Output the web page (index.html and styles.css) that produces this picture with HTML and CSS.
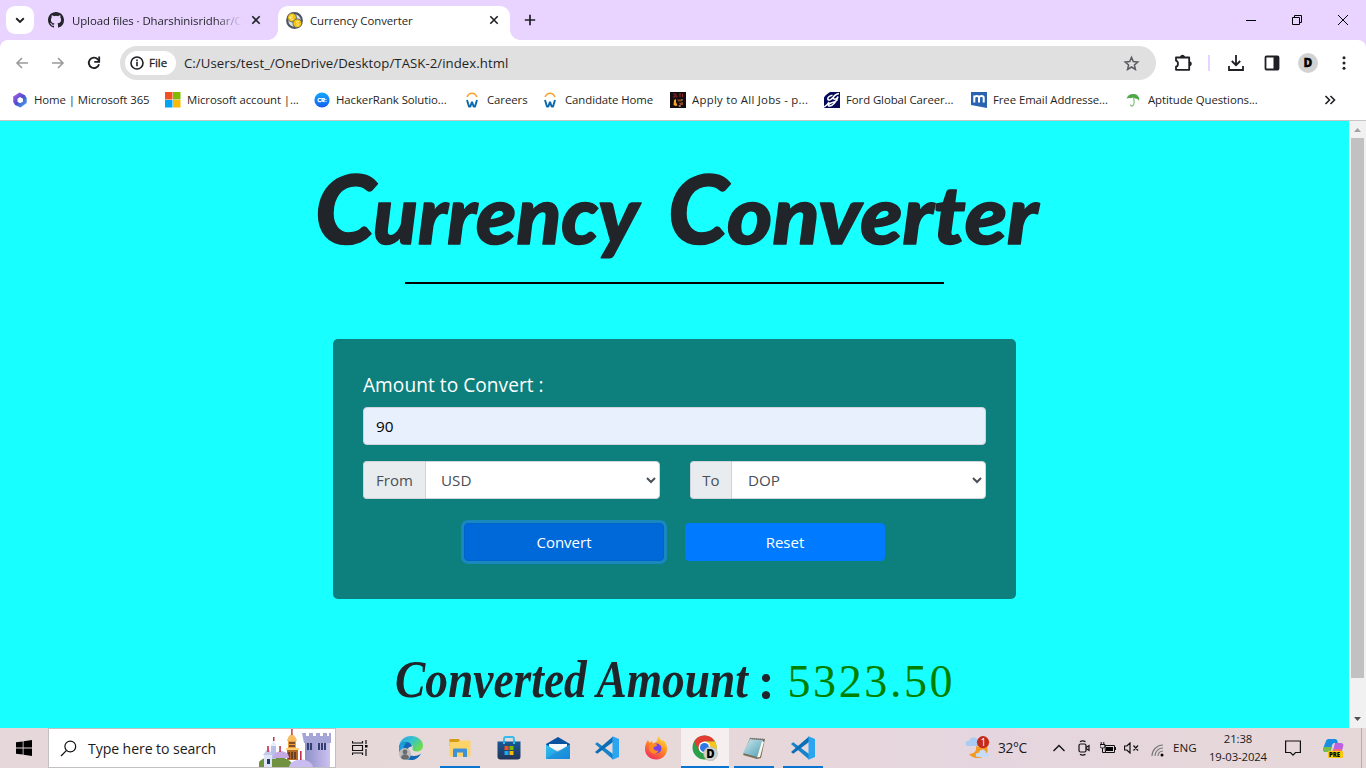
FILE: index.html
```html
<!DOCTYPE html>
<html lang="en">
<head>
<meta charset="utf-8">
<title>Currency Converter</title>
<link rel="stylesheet" href="styles.css">
</head>
<body>
<svg class="defs" width="0" height="0">
  <defs>
    <linearGradient id="m365" x1="0" y1="0" x2="1" y2="1"><stop offset="0" stop-color="#c05be8"/><stop offset=".5" stop-color="#4a50cf"/><stop offset="1" stop-color="#42b4f0"/></linearGradient>
    <linearGradient id="edgeA" x1="0" y1="0" x2="1" y2=".6"><stop offset="0" stop-color="#2b9fe0"/><stop offset=".5" stop-color="#35c2d0"/><stop offset="1" stop-color="#6fdc4c"/></linearGradient>
    <linearGradient id="fox" x1=".8" y1="0" x2=".2" y2="1"><stop offset="0" stop-color="#ffe03a"/><stop offset=".45" stop-color="#ff8a1f"/><stop offset="1" stop-color="#ef2763"/></linearGradient>
    <linearGradient id="tower" x1="0" x2="1"><stop offset="0" stop-color="#8e8fc9"/><stop offset="1" stop-color="#cdc2f0"/></linearGradient>
    <linearGradient id="store" x1="0" y1="0" x2="0" y2="1"><stop offset="0" stop-color="#155a97"/><stop offset="1" stop-color="#233456"/></linearGradient>
    <linearGradient id="mail" x1="0" y1="0" x2="1" y2="1"><stop offset="0" stop-color="#35c5f2"/><stop offset="1" stop-color="#1a86d8"/></linearGradient>
    <linearGradient id="pad" x1="0" y1="0" x2="1" y2="1"><stop offset="0" stop-color="#cfeaf0"/><stop offset="1" stop-color="#4f9fb3"/></linearGradient>
    <linearGradient id="hr" x1="0" y1="0" x2="0" y2="1"><stop offset="0" stop-color="#12a8ff"/><stop offset="1" stop-color="#1260f0"/></linearGradient>
    <symbol id="careers" viewBox="0 0 16 16"><path d="M2 5C3.200 2.400 5 1.200 7 1.200s3.800 1.200 5 3.800" fill="none" stroke="#f5a32c" stroke-width="1.500"/><path d="M2 8l2 6.600h1.300L7 9.800l1.700 4.800H10L12 8" fill="none" stroke="#0a68ae" stroke-width="1.900" stroke-linejoin="bevel"/></symbol>
    <symbol id="close" viewBox="0 0 10 10"><path d="M1.300 1.300l7.400 7.400M8.700 1.300L1.300 8.700" stroke="#1f1f24" stroke-width="1.600"/></symbol>
    <symbol id="vscode" viewBox="0 0 24 24"><path d="M0 8l2.200-1.700L18 18v5.500z" fill="#1583cc"/><path d="M0 16l2.200 1.700L18 6V.5z" fill="#0b6db5"/><path d="M17.500.2L24 3v18l-6.500 2.800z" fill="#2ba5ef"/></symbol>
  </defs>
</svg>

<header class="tabstrip">
  <div class="tab-search"><svg width="10" height="7" viewBox="0 0 10 7"><path d="M1.200 1.300L5 5l3.800-3.700" fill="none" stroke="#1f1f24" stroke-width="1.900"/></svg></div>
  <div class="tab tab-idle">
    <svg width="16" height="16" viewBox="0 0 16 16"><path fill="#24242c" d="M8 0C3.580 0 0 3.580 0 8c0 3.540 2.290 6.530 5.470 7.590.4.070.550-.170.550-.380 0-.190-.010-.820-.010-1.490-2.010.370-2.530-.490-2.690-.940-.090-.230-.480-.940-.820-1.130-.280-.150-.680-.520-.010-.530.630-.010 1.080.580 1.230.820.720 1.210 1.870.870 2.330.660.070-.520.280-.870.510-1.070-1.780-.2-3.640-.890-3.640-3.950 0-.870.310-1.590.820-2.150-.080-.2-.360-1.020.080-2.120 0 0 .670-.210 2.200.820a7.500 7.500 0 0 1 4 0c1.530-1.040 2.200-.820 2.200-.820.440 1.100.160 1.920.080 2.120.510.560.820 1.270.820 2.150 0 3.070-1.870 3.750-3.650 3.950.290.250.540.730.540 1.480 0 1.070-.010 1.930-.010 2.200 0 .210.150.460.550.380A8 8 0 0 0 16 8c0-4.420-3.580-8-8-8z"/></svg>
    <span class="tab-title fade">Upload files · Dharshinisridhar/C</span>
    <svg class="tab-x" width="10" height="10"><use href="#close"/></svg>
  </div>
  <div class="tab tab-live">
    <svg width="17" height="17" viewBox="0 0 17 17"><circle cx="8.500" cy="8.500" r="7.300" fill="#dfe2e8" stroke="#4b5563" stroke-width="2.200"/><circle cx="6" cy="5.500" r="4.400" fill="#f6c40d" stroke="#4b5563" stroke-width=".8"/><circle cx="11.300" cy="11.300" r="4.400" fill="#f6c40d" stroke="#4b5563" stroke-width=".8"/><path d="M7.200 4a2 2 0 1 0 0 3.200M4 5.600h2.500M12.800 9.900c-1.400-1-2.800-.3-2.300.7s2.600.9 2.200 2-1.800.8-2.500.2" fill="none" stroke="#fff3a6" stroke-width=".9"/></svg>
    <span class="tab-title">Currency Converter</span>
    <svg class="tab-x" width="10" height="10"><use href="#close"/></svg>
  </div>
  <svg class="new-tab" width="12" height="12" viewBox="0 0 12 12"><path d="M6 .8v10.400M.8 6h10.400" stroke="#1f1f24" stroke-width="1.700"/></svg>
  <div class="win-controls">
    <svg width="12" height="12" viewBox="0 0 12 12"><path d="M1 6.500h10" stroke="#000"/></svg>
    <svg width="12" height="12" viewBox="0 0 12 12"><path d="M1.500 3.500h7v7h-7zM3.500 3.500v-2h7v7h-2" fill="none" stroke="#000"/></svg>
    <svg width="12" height="12" viewBox="0 0 12 12"><path d="M1 1l10 10M11 1L1 11" stroke="#000"/></svg>
  </div>
</header>

<nav class="toolbar">
  <div class="nav-buttons">
    <svg width="14" height="12" viewBox="0 0 14 12"><path d="M13 6H2M7 1L2 6l5 5" fill="none" stroke="#9b9b9e" stroke-width="1.600"/></svg>
    <svg width="14" height="12" viewBox="0 0 14 12"><path d="M1 6h11M7 1l5 5-5 5" fill="none" stroke="#9b9b9e" stroke-width="1.600"/></svg>
    <svg width="14" height="14" viewBox="0 0 14 14"><path d="M12 8.300A5.200 5.200 0 1 1 10.800 3.300L12 4.600" fill="none" stroke="#1f1f24" stroke-width="1.900"/><path d="M12.200.5v5.300H7.300" fill="none" stroke="#1f1f24" stroke-width="1.800"/></svg>
  </div>
  <div class="omnibox">
    <div class="file-chip"><svg width="14" height="14" viewBox="0 0 14 14"><circle cx="7" cy="7" r="6" fill="none" stroke="#1f1f24" stroke-width="1.600"/><path d="M7 6v4.200M7 3.600v1.600" stroke="#1f1f24" stroke-width="1.600"/></svg><span>File</span></div>
    <span class="url">C:/Users/test_/OneDrive/Desktop/TASK-2/index.html</span>
    <svg class="star" width="17" height="17" viewBox="0 0 17 17"><path d="M8.500 2.400l1.800 4.200 4.500.4-3.400 3 1 4.400-3.900-2.400-3.900 2.400 1-4.400-3.400-3 4.500-.4z" fill="none" stroke="#5b5b60" stroke-width="1.500"/></svg>
  </div>
  <div class="actions">
    <svg width="18" height="18" viewBox="0 0 18 18"><path d="M2 3.500h13.200v12.300H2V12.700c2.600-.3 2.600-5.500 0-6z" fill="none" stroke="#1f1f24" stroke-width="1.800" stroke-linejoin="round"/><path d="M6 3.500c0-3.600 5-3.600 5 0zM15.200 7.300c3.400 0 3.400 4.800 0 4.800z" fill="#1f1f24"/></svg>
    <i class="sep"></i>
    <svg width="16" height="16" viewBox="0 0 16 16"><path d="M8 0v10M3.800 6L8 10.200 12.200 6M1 11v4h14v-4" fill="none" stroke="#1f1f24" stroke-width="1.800"/></svg>
    <svg width="16" height="16" viewBox="0 0 16 16"><rect x="1.500" y="1.500" width="13" height="13" rx="1" fill="none" stroke="#1f1f24" stroke-width="1.800"/><path d="M9.500 1.500h5v13h-5z" fill="#1f1f24"/></svg>
    <span class="avatar">D</span>
    <svg width="4" height="14" viewBox="0 0 4 14"><g fill="#1f1f24"><circle cx="2" cy="1.700" r="1.500"/><circle cx="2" cy="7" r="1.500"/><circle cx="2" cy="12.300" r="1.500"/></g></svg>
  </div>
</nav>

<nav class="bookmarks">
  <a class="bm"><svg width="16" height="16" viewBox="0 0 16 16"><path d="M7.500.5l5.500 2.700 1.700 2.800v5L8.500 15.500 3 13 1.200 10V4.500z" fill="url(#m365)"/><path d="M8 5l3 1.700v3L8 11.300 5.500 9.700v-3z" fill="#fff"/></svg><span>Home | Microsoft 365</span></a>
  <a class="bm"><svg width="16" height="16" viewBox="0 0 16 16"><path fill="#f35020" d="M0 0h7.500v7.500H0z"/><path fill="#80ba02" d="M8 0h7.500v7.500H8z"/><path fill="#02a4ef" d="M0 8h7.500v7.500H0z"/><path fill="#ffb902" d="M8 8h7.500v7.500H8z"/></svg><span>Microsoft account |...</span></a>
  <a class="bm"><svg width="16" height="16" viewBox="0 0 16 16"><circle cx="8" cy="8" r="7.600" fill="url(#hr)"/><path d="M7 6.500H5.200C3.700 6.500 3.700 9.700 5.200 9.700H7M8 10V6.500h1.800c1.200 0 1.200 1.600 0 1.600H8.500L10.500 10M12 7v.8M12 9v.8" fill="none" stroke="#fff" stroke-width="1.200"/></svg><span>HackerRank Solutio...</span></a>
  <a class="bm"><svg width="16" height="16"><use href="#careers"/></svg><span>Careers</span></a>
  <a class="bm"><svg width="16" height="16"><use href="#careers"/></svg><span>Candidate Home</span></a>
  <a class="bm wide"><svg width="16" height="16" viewBox="0 0 16 16"><path d="M0 0h16v16H0z" fill="#150d0e"/><path d="M3 2h2v3H3M6 1.500V5h1.500M9 2h2M10 2v3M12.500 2v3" fill="none" stroke="#8e2424"/><path d="M4 8l2-1v3l1.500 3.500-2 .5-2-1z" fill="#f4a328"/><path d="M7 7.500h6l-2 2H8zM9 11l4-1v3h-3z" fill="#8b4a25"/><path d="M9 13.500h1.500v1H9zM11 8h2" stroke="#c6a08e" stroke-width=".7"/></svg><span>Apply to All Jobs - p...</span></a>
  <a class="bm"><svg width="16" height="16" viewBox="0 0 16 16"><path d="M0 0h16v16H0z" fill="#050b58"/><path d="M0 0h6C3.500 1.500 1.500 3 0 5.500z" fill="#fff"/><path d="M8.500 3.500C6 3 3 6 4 7.500S8 7 9 5.500M15 1.500c-3.500.5-6.500 3.500-5.500 5s4 0 4.500-2c-1 5-5.500 9-8 9.500s-2-2 1-3 5-1.800 6.500-3M0 15c2-1 4-3 5-5" fill="none" stroke="#fff" stroke-width="1.500"/></svg><span>Ford Global Career...</span></a>
  <a class="bm"><svg width="16" height="16" viewBox="0 0 16 16"><path d="M0 0h16v16L0 13z" fill="#2962ae"/><path d="M3.300 10.500V3.500M3.300 5.500c.5-2 4.700-2 4.700 0v5M8 5.500c.5-2 4.700-2 4.700 0v5" fill="none" stroke="#fff" stroke-width="2"/></svg><span>Free Email Addresse...</span></a>
  <a class="bm"><svg width="16" height="16" viewBox="0 0 16 16"><path d="M.5 6.500C2 2.500 5 1.500 8 2c4 .5 6 3.500 5 7-1-2-2-2.700-3-2.200-2-1.200-3.500-1.100-5-.5C3.500 5.800 2 6 .5 6.500z" fill="#4eaa49"/><path d="M7.500 6c1 3 1 5.500-.5 7.500-1 1-2.700.5-2.500-1" fill="none" stroke="#83bd7d" stroke-width="1.200"/></svg><span>Aptitude Questions...</span></a>
  <svg class="more" width="12" height="10" viewBox="0 0 12 10"><path d="M1.500 1l4 4-4 4M6.500 1l4 4-4 4" fill="none" stroke="#1f1f24" stroke-width="1.600"/></svg>
</nav>

<div class="viewport">
  <main class="page">
    <svg class="heading" width="730" height="130" viewBox="0 0 730 130">
      <text><tspan class="cap" x="2" y="88" textLength="60" lengthAdjust="spacingAndGlyphs">C</tspan><tspan class="low" x="60" y="88" textLength="266" lengthAdjust="spacingAndGlyphs">urrency</tspan></text>
      <text><tspan class="cap" x="355" y="88" textLength="60" lengthAdjust="spacingAndGlyphs">C</tspan><tspan class="low" x="414" y="88" textLength="311" lengthAdjust="spacingAndGlyphs">onverter</tspan></text>
    </svg>
    <hr class="rule">
    <form class="card">
      <label class="amount-label" for="amt">Amount to Convert :</label>
      <input id="amt" class="amount" type="text" value="90">
      <div class="pickers">
        <div class="group group-from"><span class="addon">From</span><select class="currency"><option>USD</option></select></div>
        <div class="group group-to"><span class="addon">To</span><select class="currency"><option>DOP</option></select></div>
      </div>
      <div class="buttons"><button type="button" class="btn btn-focus">Convert</button><button type="button" class="btn">Reset</button></div>
    </form>
    <div class="result">
      <svg width="360" height="66" viewBox="0 0 360 66"><text class="result-label" x="1" y="50" textLength="353" lengthAdjust="spacingAndGlyphs">Converted Amount</text></svg>
      <span class="colon">:</span>
      <span class="result-value">5323.50</span>
    </div>
  </main>
  <aside class="scrollbar">
    <svg width="17" height="17" viewBox="0 0 17 17"><path d="M5 11h7L8.500 7z" fill="#a3a3a3"/></svg>
    <i class="thumb"></i>
    <svg width="17" height="17" viewBox="0 0 17 17"><path d="M5 6h7l-3.500 4z" fill="#505050"/></svg>
  </aside>
</div>

<footer class="taskbar">
  <div class="start"><svg width="16" height="16" viewBox="0 0 16 16"><path d="M0 2.300l6.700-.9v6.200H0zM7.500 1.200L16 0v7.600H7.500zM0 8.400h6.700v6.200L0 13.700zM7.500 8.400H16V16l-8.500-1.200z"/></svg></div>
  <div class="search">
    <svg width="17" height="17" viewBox="0 0 17 17"><circle cx="10.300" cy="6.500" r="5.400" fill="none" stroke="#111" stroke-width="1.200"/><path d="M6.500 10.400L1 16" stroke="#111" stroke-width="1.300"/></svg>
    <span class="search-text">Type here to search</span>
    <svg class="castle" width="76" height="38" viewBox="0 0 76 38">
      <path d="M0 38v-5c4-5 11-6 18-5 9 0 15 4 17 10z" fill="#6f9140"/>
      <path d="M12 17h5v13h-5z" fill="#b9c0e8"/><path d="M11.500 17l3-6 3 6z" fill="#e9ecfb"/><path d="M14 8h1.500v4H14z" fill="#c72c4d"/>
      <path d="M28 20h11v11H28z" fill="#b66a24"/><path d="M29 12h8v9h-8z" fill="#f0a03a"/><path d="M28 12c1-5 3-6 5-7 2 1 4 3 5 7z" fill="#f8bd62"/><path d="M32.200 0h1.400v6h-1.400z" fill="#c52b45"/><path d="M30 14h6M30 17h6M30 23v7M33 23v7M36 23v7" stroke="#5a3529" stroke-width="1.600"/><path d="M27 20h13" stroke="#ffcf74" stroke-width="2"/>
      <path d="M14 29c0-9 16-9 16 0z" fill="#c5a9e5"/><path d="M20.300 17h1.500v6h-1.500z" fill="#b92b50"/>
      <path d="M5 25h8v13H5z" fill="#dfe5f7"/><path d="M4 26l5-7 5 7z" fill="#c3cbe9"/><path d="M8.200 17h1.600v6H8.200z" fill="#cf294e"/><path d="M8 30h3v5H8z" fill="#1d3b69"/>
      <path d="M46 12h25v26H46z" fill="url(#tower)"/><path d="M43 4h4v3h3V4h4v3h3V4h4v3h3V4h4v3h2V4h2v10H45z" fill="#a6a5d8"/><path d="M49 14v7M52 14v7M60 14v7M63 14v7M66 14v7" stroke="#31406e" stroke-width="2"/>
      <path d="M30 38c2-10 22-10 24 0z" fill="#c9bcf1"/><path d="M41 22h1.600v9H41z" fill="#c72c4d"/>
    </svg>
  </div>
  <div class="task taskview"><svg width="16" height="16" viewBox="0 0 16 16"><path d="M.5 1v2h10V1M.5 15v-2h10v2M.5 5.500h10v5H.5zM14 0v4M14 9v7" fill="none" stroke="#111" stroke-width="1.200"/><path d="M13 5h2.500v2.500H13z"/></svg></div>
  <div class="task"><svg width="26" height="26" viewBox="0 0 26 26"><path d="M1 13C1 5 7 1 13 1c7 0 12 4.500 12 9.500 0 4-3 6-6.500 6-3 0-4.500-1.500-4-3 .7-2 .2-4.500-3-4.500C6 9 3 12 1 13z" fill="url(#edgeA)"/><path d="M1 13c0-4 3.500-6.500 8-6 3 .4 5 2.500 5 4.500-6-1-6 9 1 9.500 3.500.3 6-1 8-2.500C20 24 16 25.500 12 25 5 24.500 1 19 1 13z" fill="#1368b6"/><path d="M1 13c0-4 4-6 8-5.500C4 10 6 17 8 20c1 3 3 4.500 5 5C5 25.500 1 19 1 13z" fill="#1e9fdc"/><circle cx="7" cy="19" r="6" fill="#bdbdbd"/><circle cx="7" cy="17" r="2.400" fill="#6c6c6c"/><path d="M3 23c0-5 8-5 8 0-2 2-6 2-8 0z" fill="#6c6c6c"/></svg></div>
  <div class="task open"><svg width="22" height="20" viewBox="0 0 22 20"><path d="M.5 1h9l2 2H21v5H.5z" fill="#d99a16"/><path d="M.5 4H9l2-1.500h10.500v16H.5z" fill="#fed468"/><path d="M4 19v-7c0-1 .5-1.500 1.500-1.500h11c1 0 1.500.5 1.500 1.500v7h-4v-4.500H8V19z" fill="#3d91d8"/></svg></div>
  <div class="task"><svg width="24" height="24" viewBox="0 0 24 24"><path d="M7 8V3.500c0-1.500.5-2.500 1.500-2.500h7c1 0 1.500 1 1.500 2.500V8" fill="none" stroke="#35bced" stroke-width="2"/><path d="M.5 5.500h23v15c0 2-1 3-3 3h-17c-2 0-3-1-3-3z" fill="url(#store)"/><path d="M7 5.500V8M17 5.500V8" stroke="#35bced" stroke-width="2"/><path d="M7.500 10h4v4h-4z" fill="#f25022"/><path d="M12.500 10h4v4h-4z" fill="#7fba00"/><path d="M7.500 15h4v4h-4z" fill="#20a5ef"/><path d="M12.500 15h4v4h-4z" fill="#ffb900"/></svg></div>
  <div class="task"><svg width="24" height="24" viewBox="0 0 24 24"><path d="M0 8L12 1l12 7v4H0z" fill="#0b52a0"/><path d="M3 8h18v6H3z" fill="#f5f9fc"/><path d="M0 8.500l12 7.500 12-7.500v14.500H0z" fill="url(#mail)"/><path d="M0 23L12 15l12-6.500V23z" fill="#188bd9" opacity=".55"/></svg></div>
  <div class="task"><svg width="24" height="24"><use href="#vscode"/></svg></div>
  <div class="task"><svg width="24" height="24" viewBox="0 0 24 24"><path d="M4 4l1.500 3L8 5l1 3 4-3c0-2 1-4 2-4.500.5 2 2 3 3 4.500l1-1c4 3 5 9 3 13.500-2 4-6 6-10 6C6 23.500 1 19 1 13c0-4 1-6 3-9z" fill="url(#fox)"/><circle cx="12.500" cy="12.500" r="5" fill="#7543e5"/><path d="M6 9c3-3 7-1 7 0 0 2-3.500 1-3.500 3s3 3.500 5 2.500c-1 3-4 4-6.500 2.500s-4-5-2-8z" fill="#ff8d22"/></svg></div>
  <div class="task open active"><svg width="26" height="26" viewBox="0 0 26 26"><circle cx="12.500" cy="12.500" r="12" fill="#2c9f4b"/><path d="M2.100 6.500A12 12 0 0 1 22.900 6.500H12.500L7.300 15.500z" fill="#e33d32"/><path d="M22.900 6.500A12 12 0 0 1 12.500 24.500L17.700 15.500 12.500 6.500z" fill="#fac51c"/><circle cx="12.500" cy="12.500" r="5.900" fill="#fff"/><circle cx="12.500" cy="12.500" r="4.500" fill="#2d78e5"/><circle cx="18.500" cy="18.800" r="7" fill="#d0d0d0" stroke="#aaa" stroke-width=".5"/><text class="badge" x="14.300" y="22.700">D</text></svg></div>
  <div class="task open short"><svg width="24" height="24" viewBox="0 0 24 24"><path d="M8 2l15 1-4 19-4 1-14-4z" fill="#7b6c56"/><path d="M8 3l13 1-6 17L1 17z" fill="url(#pad)"/><path d="M20 5l2 1-4 15-3 .5z" fill="#f7f7f0"/><path d="M8 2.500l14 1" stroke="#777" stroke-width="1.500" stroke-dasharray="1 1"/></svg></div>
  <div class="task open short"><svg width="24" height="24"><use href="#vscode"/></svg></div>
  <div class="tray">
    <svg class="weather" width="26" height="24" viewBox="0 0 26 24"><path d="M11 10c1 5-2 8-7 8 4 6 15 5 18-1 2-5-1-10-5-11 1 5-2 6-6 4z" fill="#f39a20"/><path d="M2 10c-3-2-1-6 2-5C5 0 12 0 13 5c3 0 4 5 0 5z" fill="#a9cdf2"/><path d="M12 21c-3-2 0-5 2-4 1-5 7-4 7 0 4-1 4 4 1 4z" fill="#c5dbf8"/><circle cx="18" cy="6.200" r="6.100" fill="#c42b1c"/><text class="count" x="15.500" y="10">1</text></svg>
    <span class="temp">32°C</span>
    <svg class="chev" width="12" height="8" viewBox="0 0 12 8"><path d="M.5 7L6 1.500 11.500 7" fill="none" stroke="#111" stroke-width="1.400"/></svg>
    <svg class="cam" width="12" height="16" viewBox="0 0 12 16"><rect x="1" y="4" width="7" height="8" rx="1.500" fill="none" stroke="#111" stroke-width="1.200"/><path d="M8 7.500L11 5.500v5L8 8.500M2 1.800c1.500-1 4-1 5.500 0M2 14.200c1.500 1 4 1 5.500 0" fill="none" stroke="#111" stroke-width="1.200"/></svg>
    <svg class="bat" width="16" height="12" viewBox="0 0 16 12"><path d="M5 3.500h9.500v7h-9z" fill="none" stroke="#111"/><path d="M6 5h7v4H6z"/><path d="M15.500 5v3M0 2.500h5v2c0 2-5 2-5 0zM1.200 0v2.500M3.800 0v2.500M2.500 6v4.500h3" fill="none" stroke="#111"/></svg>
    <svg class="vol" width="15" height="12" viewBox="0 0 15 12"><path d="M.5 4h2.300L6 1v10L2.800 8H.5zM9.500 3.500l4.500 5M14 3.500l-4.500 5" fill="none" stroke="#111" stroke-width="1.200"/></svg>
    <svg class="wifi" width="13" height="13" viewBox="0 0 13 13"><path d="M1 12C1 6 6 1 12 1M4 12c0-4.500 3.500-8 8-8M7 12c0-3 2-5 5-5" fill="none" stroke="#777" stroke-width="1.100"/><circle cx="11" cy="11" r="1.500"/></svg>
    <span class="lang">ENG</span>
    <div class="clock"><span>21:38</span><span>19-03-2024</span></div>
    <svg class="note" width="16" height="17" viewBox="0 0 16 17"><path d="M.6 1h14.800v11.500H10.500L8 15.200 5.500 12.500H.6z" fill="none" stroke="#111" stroke-width="1.200"/></svg>
    <svg class="copilot" width="21" height="20" viewBox="0 0 21 20"><path d="M6 1h6c2 0 2 1 3 4H11c-3 0-2 9-5 9H2C0 14 0 11 1 8l2-5c.7-1.500 1.500-2 3-2z" fill="#188fe0"/><path d="M1 9h8c-1 4-2 5-4 5H2C0 14 .5 11 1 9z" fill="#77bd46"/><path d="M12 5h5c3 0 4 1 3 4l-2 7H9z" fill="#bd62df"/><path d="M10 11h9l-1 4H9z" fill="#f36c7d"/><rect x="5" y="13" width="15" height="7" rx="1" fill="#ffc90a"/><text class="pre" x="6" y="18.800">PRE</text></svg>
    <i class="show-desktop"></i>
  </div>
</footer>
</body>
</html>
```

FILE: styles.css
```css
* { box-sizing: border-box; }
body { margin: 0; width: 1366px; height: 768px; overflow: hidden; display: flex; flex-direction: column; font-family: "Open Sans", "Noto Sans", sans-serif; background: #fff; color: #1f1f24; }
svg { display: block; flex: none; }
.defs { position: absolute; }

.tabstrip { flex: none; height: 40px; background: #e8d4ff; display: flex; align-items: flex-start; padding-top: 6px; }
.tab-search { width: 28px; height: 28px; margin-left: 6px; border-radius: 9px; background: #fff; display: grid; place-items: center; }
.tab { height: 34px; display: flex; align-items: center; padding-bottom: 6px; }
.tab-idle { width: 230px; margin-left: 14px; }
.tab-idle .tab-title { width: 170px; margin-left: 8px; letter-spacing: -.08px; }
.tab-idle .tab-x { margin-left: 9px; }
.tab-title { font-size: 11.4px; white-space: nowrap; letter-spacing: -.07px; }
.fade { -webkit-mask-image: linear-gradient(90deg, #000 84%, transparent); mask-image: linear-gradient(90deg, #000 84%, transparent); }
.tab-live { position: relative; width: 232px; background: #fff; border-radius: 10px 10px 0 0; padding-left: 8px; }
.tab-live::before, .tab-live::after { content: ""; position: absolute; bottom: 0; width: 10px; height: 10px; }
.tab-live::before { left: -10px; background: radial-gradient(circle at 0 0, transparent 9.5px, #fff 10px); }
.tab-live::after { right: -10px; background: radial-gradient(circle at 100% 0, transparent 9.5px, #fff 10px); }
.tab-live .tab-title { width: 172px; margin-left: 7px; }
.tab-live .tab-x { margin-left: 7px; }
.new-tab { margin: 8px 0 0 14px; }
.win-controls { margin: 8px 17px 0 auto; display: flex; gap: 34px; }

.toolbar { position: relative; flex: none; height: 46px; display: flex; align-items: center; background: #e8d4ff; isolation: isolate; }
.toolbar::before { content: ""; position: absolute; inset: 0; z-index: -1; background: #fff; border-radius: 8px 8px 0 0; }
.nav-buttons { width: 120px; display: flex; gap: 22px; padding-left: 15px; align-items: center; }
.omnibox { width: 1036px; height: 34px; border-radius: 17px; background: #e0e0e0; display: flex; align-items: center; padding: 0 16px 0 5px; }
.file-chip { width: 51px; height: 24px; border-radius: 12px; background: #fff; display: flex; align-items: center; gap: 5px; padding: 0 0 1px 5px; font-size: 11.500px; -webkit-text-stroke: .3px #1f1f24; }
.url { margin-left: 8px; padding-bottom: 1px; font-size: 13.200px; letter-spacing: .05px; }
.star { margin-left: auto; }
.actions { display: flex; align-items: center; margin-left: 18px; }
.sep { width: 2px; height: 16px; background: #e8d4ff; margin: 0 18px 0 16px; }
.actions svg:nth-of-type(3) { margin-left: 20px; }
.avatar { width: 20px; height: 20px; margin: 0 24px 0 18px; border-radius: 50%; background: #d2d2d2; color: #000; font: 900 12px/20px "Open Sans", sans-serif; text-align: center; -webkit-text-stroke: .3px #000; }

.bookmarks { flex: none; height: 35px; border-bottom: 1px solid #c6c6c6; padding: 0 0 6px 12px; display: grid; grid-template-columns: 153px 149px 151px 78px 127px 154px 147px 155px 198px 12px; align-items: center; }
.bm { display: flex; align-items: center; gap: 6px; font-size: 11.400px; letter-spacing: -.08px; white-space: nowrap; }
.bm span { padding-bottom: 2px; }
.wide { letter-spacing: .25px; }

.viewport { flex: none; height: 607px; display: flex; }
.page { width: 1349px; height: 607px; background: #18ffff; overflow: hidden; display: flex; flex-direction: column; align-items: center; }
.heading { margin: 35px 0 -4px 7px; overflow: visible; }
.heading text { font-family: Lato, "Open Sans", cursive; font-style: italic; font-weight: 900; fill: #212529; stroke: #212529; stroke-width: 1.500px; stroke-linejoin: round; }
.cap { font-size: 96px; }
.low { font-size: 80px; }
.rule { flex: none; width: 539px; height: 2px; border: 0; background: #000; margin: 0; }
.card { flex: none; width: 683px; height: 260px; margin-top: 55px; padding: 30px; border-radius: 5px; background: #0d807e; }
.amount-label { display: block; height: 38px; font-size: 19.100px; line-height: 32px; letter-spacing: .05px; color: #fff; }
.amount { display: block; width: 623px; height: 38px; padding: 6px 12px; border: 1px solid #ced4da; border-radius: 4px; background: #e8f0fe; color: #000; font: 15.300px "Open Sans", sans-serif; }
.pickers { display: flex; justify-content: space-between; margin-top: 16px; }
.group { height: 38px; display: flex; }
.group-from { width: 297px; }
.group-to { width: 296px; }
.addon { border: 1px solid #ced4da; border-right: 0; border-radius: 4px 0 0 4px; background: #e9ecef; color: #495057; font-size: 15px; line-height: 37px; text-align: center; }
.group-from .addon { width: 62px; }
.group-to .addon { width: 41px; }
.currency { flex: 1; height: 38px; padding: 6px 12px 6px 11px; border: 1px solid #ced4da; border-radius: 0 4px 4px 0; background: #fff; color: #495057; font: 15.200px "Open Sans", sans-serif; }
.group-to .currency { padding-left: 12px; }
.buttons { display: flex; justify-content: center; gap: 21px; margin-top: 24px; }
.btn { width: 200px; height: 38px; padding: 0; border: 1px solid #007bff; border-radius: 4px; background: #007bff; color: #fff; font: 15px "Open Sans", sans-serif; }
.btn-focus { background: #0069d9; border-color: #0062cc; box-shadow: 0 0 0 3px rgba(38, 143, 255, .5); }
.result { width: 562px; margin-top: 48px; display: flex; align-items: flex-start; }
.result svg { overflow: visible; }
.result-label { font: italic 700 53px "Liberation Serif", serif; fill: #212529; }
.colon { width: 26px; margin: 4px 0 0 6px; font: 900 50px/58px Lato, "Open Sans", sans-serif; color: #212529; }
.result-value { margin: 6px 0 0 2px; font: 46px/58px "Liberation Serif", serif; color: #008000; letter-spacing: 2.600px; }
.scrollbar { width: 17px; background: #f1f1f1; }
.thumb { display: block; width: 13px; height: 540px; margin: 0 2px 33px; background: #c1c1c1; }

.taskbar { flex: none; height: 40px; background: linear-gradient(90deg, #e6d7da, #e7d8d9 50%, #e5d5de 72%, #e6d8d9); display: flex; align-items: stretch; color: #1b1b1b; }
.start { width: 48px; display: grid; place-items: center; }
.search { width: 288px; border: 1px solid #c4c0c2; background: #fff; display: flex; align-items: center; padding-left: 11px; }
.search-text { margin-left: 11px; width: 171px; font-size: 14.100px; letter-spacing: -.08px; white-space: nowrap; }
.task { width: 49px; display: grid; place-items: center; position: relative; }
.taskview { width: 48px; margin-right: 2px; }
.open::after { content: ""; position: absolute; left: 5px; right: 4px; bottom: 0; height: 2px; background: #0a74d1; }
.active { background: #f5efef; border-left: 1px solid #e6d7da; }
.active::after { left: 0; right: 0; }
.badge { font: 900 11.500px "Open Sans", sans-serif; }
.tray { margin-left: auto; display: flex; align-items: center; width: 401px; }
.temp { width: 45px; margin-left: 7px; padding-bottom: 1px; font-size: 13.800px; letter-spacing: -.4px; }
.count { font: 10px "Open Sans", sans-serif; fill: #fff; }
.chev { margin-left: 10px; }
.cam { margin-left: 13px; }
.bat { margin-left: 10px; }
.vol { margin-left: 8px; }
.wifi { margin-left: 12px; margin-top: 4px; }
.lang { width: 32px; margin-left: 9px; padding-bottom: 1px; font-size: 11.600px; }
.clock { width: 66px; display: flex; flex-direction: column; text-align: center; font-size: 11.300px; line-height: 18px; letter-spacing: -.1px; padding-bottom: 1px; }
.note { margin-left: 14px; }
.copilot { margin-left: 22px; }
.pre { font: 900 6px "Open Sans", sans-serif; }
.show-desktop { width: 1px; height: 40px; margin-left: auto; margin-right: 4px; background: #b7acb0; }
```
